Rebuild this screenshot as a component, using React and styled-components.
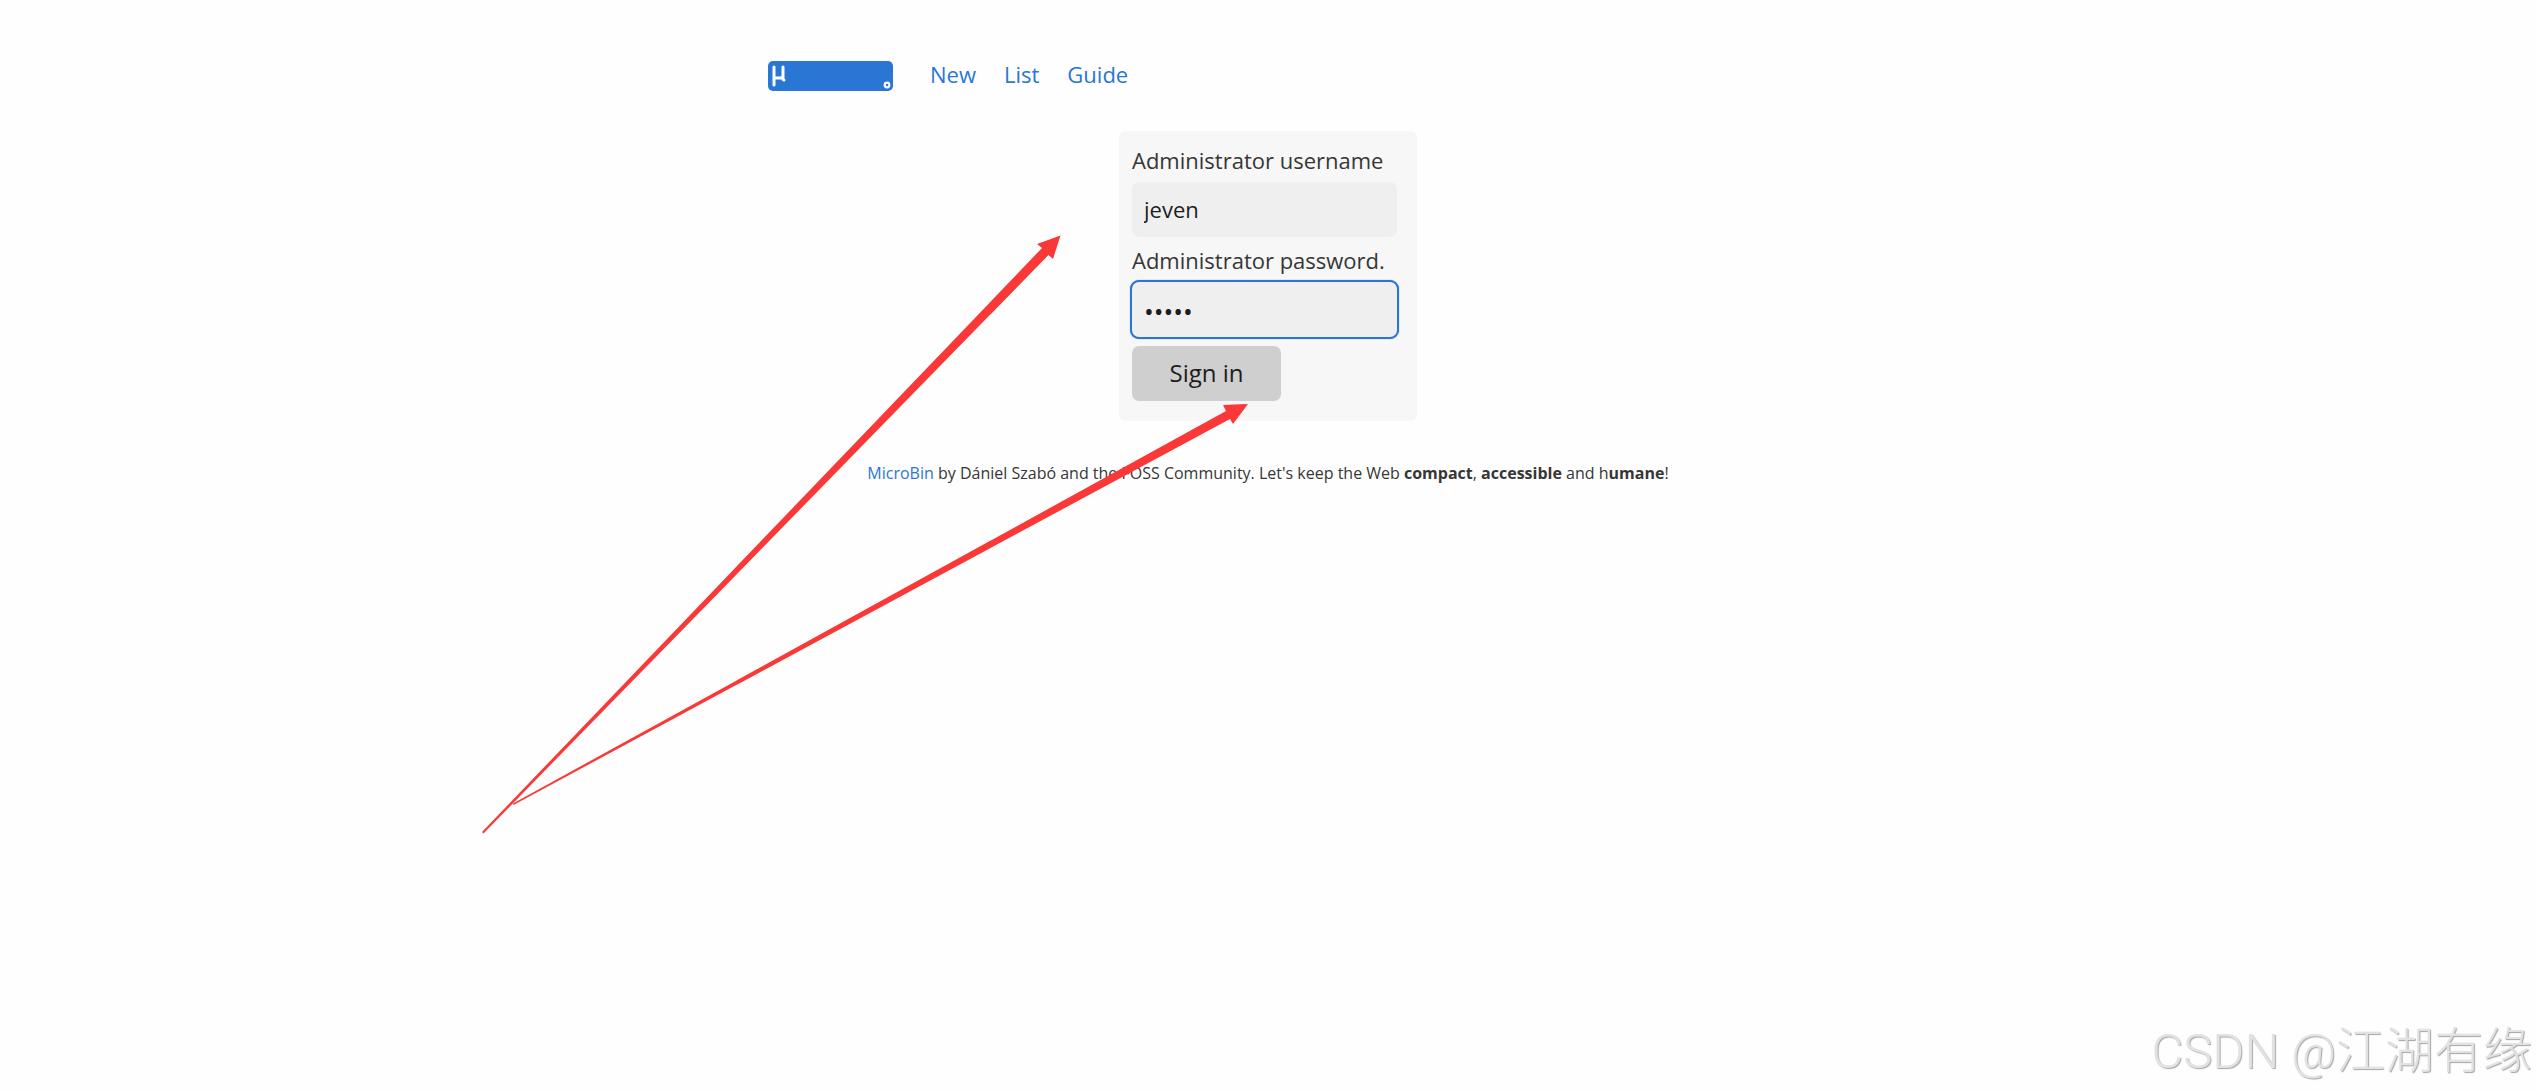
import React from "react";
import styled, { createGlobalStyle } from "styled-components";

const GlobalStyle = createGlobalStyle`
  * {
    box-sizing: border-box;
  }

  body {
    margin: 0;
    background-color: #fefefe;
    color: #363636;
    font-family: "Open Sans", "Noto Sans", sans-serif;
    font-size: 22px;
    line-height: 32px;
  }
`;

const Page = styled.div`
  width: 100%;
  max-width: 1000px;
  margin: 0 auto;
  padding-top: 60px;
`;

const Nav = styled.nav`
  display: flex;
  align-items: center;
  gap: 28px;
  height: 32px;
`;

const Link = styled.a`
  color: #2a76d4;
  text-decoration: none;
`;

const NavLink = styled(Link)`
  padding-bottom: 4px;
`;

const LogoLink = styled.a`
  display: flex;
  margin-right: 9px;
`;

const LoginForm = styled.form`
  display: flex;
  flex-direction: column;
  align-items: flex-start;
  width: fit-content;
  margin: 39px auto 0;
  padding: 13px 20px 20px 13px;
  border-radius: 7px;
  background-color: #f7f7f7;
`;

const Label = styled.label`
  margin-bottom: 6px;
`;

const Input = styled.input`
  width: 265px;
  height: 55px;
  margin-bottom: 7px;
  padding: 0 12px 2px;
  border: none;
  border-radius: 7px;
  outline: none;
  background-color: #efefef;
  color: #1d1d1d;
  font: inherit;

  &[type="password"] {
    margin-bottom: 9px;
    padding: 2px 12px 0;
    font-size: 26px;
  }

  &:focus {
    box-shadow: 0 0 0 2px #2a76d4, 0 0 1px 2px #2a76d4;
  }
`;

const Button = styled.button`
  width: 149px;
  height: 55px;
  padding: 0 0 2px;
  border: none;
  border-radius: 7px;
  background-color: #cfcfcf;
  color: #1d1d1d;
  font: inherit;
  font-size: 24px;
  cursor: pointer;
`;

const Footer = styled.footer`
  margin-top: 36px;
  font-size: 16px;
  text-align: center;
`;

const Arrows = styled.svg`
  position: absolute;
  top: 235px;
  left: calc(50% - 786px);
  pointer-events: none;
`;

const Watermark = styled.div`
  position: fixed;
  right: 4px;
  bottom: 9px;
  color: #e2e2e2;
  font-family: Roboto, "Noto Sans CJK SC", sans-serif;
  font-size: 49px;
  font-weight: 300;
  line-height: 60px;
  text-shadow: 1px 1px 1px #a6a6a6;
`;

const Logo = () => (
  <svg width="125" height="30" viewBox="0 0 125 30" fill="none" role="img" aria-label="MicroBin">
    <rect width="125" height="30" rx="5" fill="#2a76d4" />
    <path
      d="M6 6V24M6 17H12.5Q15 17 15 14V6M15 14V17Q15 19 16 19"
      stroke="#fff"
      strokeWidth="3"
      strokeLinecap="round"
      strokeLinejoin="round"
    />
    <circle cx="119" cy="24" r="2.3" stroke="#fff" strokeWidth="2.2" />
  </svg>
);

const App = () => (
  <>
    <GlobalStyle />
    <Page>
      <Nav>
        <LogoLink href="#home">
          <Logo />
        </LogoLink>
        <NavLink href="#new">New</NavLink>
        <NavLink href="#list">List</NavLink>
        <NavLink href="#guide">Guide</NavLink>
      </Nav>
      <LoginForm onSubmit={(e) => e.preventDefault()}>
        <Label htmlFor="username">Administrator username</Label>
        <Input id="username" type="text" defaultValue="jeven" />
        <Label htmlFor="password">Administrator password.</Label>
        <Input id="password" type="password" defaultValue="admin" autoFocus />
        <Button type="submit">Sign in</Button>
      </LoginForm>
      <Footer>
        <Link href="#microbin">MicroBin</Link> by Dániel Szabó and the FOSS
        Community. Let's keep the Web <b>compact</b>, <b>accessible</b> and h
        <b>umane</b>!
      </Footer>
    </Page>
    <Arrows width="768" height="600" viewBox="0 0 768 600" fill="#fb3838" aria-hidden="true">
      <path d="M0 597L560 13L555 9L578.5 0.5L571 24L566.5 20L1.5 598.5Z" />
      <path d="M31 568.5L744 176L741 170L766 169L751 189L748 184L31.5 570Z" />
    </Arrows>
    <Watermark>CSDN @江湖有缘</Watermark>
  </>
);

export default App;
